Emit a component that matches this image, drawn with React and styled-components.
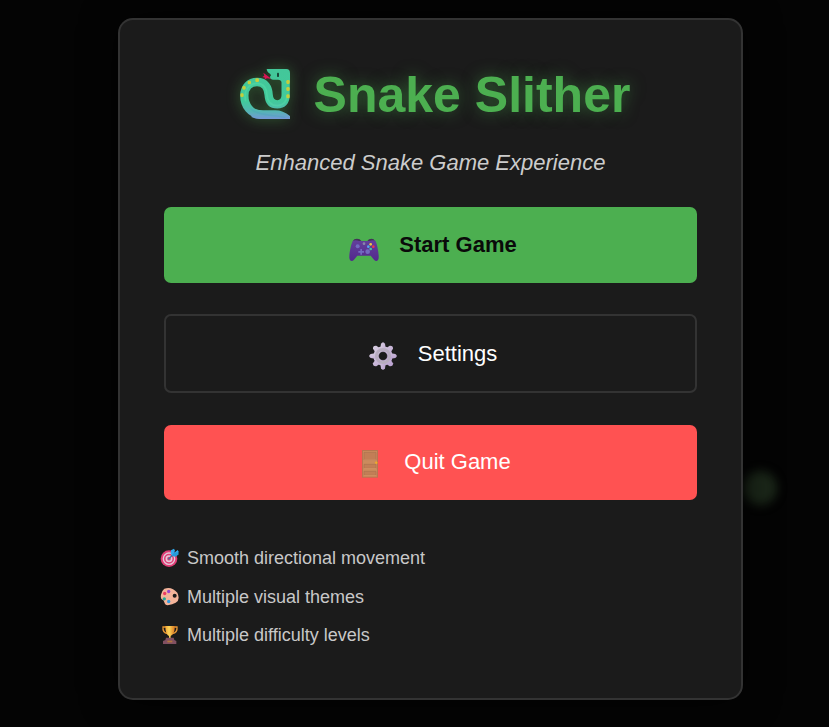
import React from 'react';
import styled, { createGlobalStyle } from 'styled-components';

const GlobalStyle = createGlobalStyle`
  *, *::before, *::after { box-sizing: border-box; }
  body {
    margin: 0;
    background: #040404;
    overflow: hidden;
    font-family: "Liberation Sans", Arial, sans-serif;
  }
`;

const Screen = styled.main`
  position: relative;
  height: 727px;
  padding: 18px 86px 0 118px;
  overflow: hidden;
`;

const Glow = styled.div`
  position: absolute;
  left: 743px;
  top: 471px;
  width: 34px;
  height: 34px;
  border-radius: 50%;
  background: #1b2719;
  filter: blur(5px);
`;

const Card = styled.section`
  position: relative;
  display: flex;
  flex-direction: column;
  height: 682px;
  padding: 44px;
  border: 2px solid #333;
  border-radius: 15px;
  background: #1b1b1b;
  box-shadow: 0 0 36px rgba(0, 0, 0, 0.7);
`;

const Title = styled.h1`
  display: flex;
  align-items: center;
  justify-content: center;
  gap: 23px;
  height: 62px;
  margin: 0;
  padding-left: 8px;
  color: #4caf50;
  font-size: 50px;
  line-height: 62px;
  white-space: nowrap;
  text-shadow: 0 0 16px rgba(76, 175, 80, 0.5);

  svg {
    margin-top: -2px;
    filter: drop-shadow(0 0 7px rgba(76, 175, 80, 0.45));
  }
`;

const Subtitle = styled.p`
  height: 26px;
  margin: 24px 0 31px;
  color: #ccc;
  font-size: 22px;
  font-style: italic;
  line-height: 26px;
  text-align: center;
`;

const Menu = styled.nav`
  display: flex;
  flex-direction: column;
`;

const MenuButton = styled.button`
  display: flex;
  align-items: center;
  justify-content: center;
  gap: ${({ $gap }) => $gap}px;
  width: 100%;
  height: ${({ $height }) => $height}px;
  margin: 0 0 ${({ $after }) => $after}px;
  padding: ${({ $outlined }) => ($outlined ? '1px 0 0' : '0 0 1px')};
  padding-left: ${({ $shift }) => $shift}px;
  border: ${({ $outlined }) => ($outlined ? '2px solid #333' : '0')};
  border-radius: 7px;
  background: ${({ $background }) => $background};
  color: ${({ $color }) => $color};
  font-family: inherit;
  font-size: 22px;
  font-weight: ${({ $bold }) => ($bold ? 700 : 400)};
  line-height: 26px;

  svg { margin-top: ${({ $drop }) => $drop}px; }
`;

const Features = styled.ul`
  display: flex;
  flex-direction: column;
  gap: 16.5px;
  margin: 47px 0 0 -4px;
  padding: 0;
  list-style: none;
`;

const Feature = styled.li`
  display: flex;
  align-items: center;
  gap: 7px;
  height: 22px;
  color: #c8c8c8;
  font-size: 18px;
  line-height: 22px;
`;

const SnakeIcon = () => (
  <svg width="52" height="52" viewBox="42 39 156 156" fill="none">
    <defs>
      <linearGradient id="snake" x1="0" y1="42" x2="0" y2="192" gradientUnits="userSpaceOnUse">
        <stop stopColor="#43c79a" /><stop offset=".65" stopColor="#42c99b" />
        <stop offset=".85" stopColor="#55b5b4" /><stop offset="1" stopColor="#7597d7" />
      </linearGradient>
    </defs>
    <path d="M136 69 115 53l3 9-6 4 8 2-2 6 8-4 14 2" fill="#db1455" />
    <path d="M108 179C77 177 58 151 58 122c0-25 16-41 38-41 25 0 34 18 35 39 1 18 9 28 26 28 16 0 25-10 25-28V60" stroke="url(#snake)" strokeWidth="25" />
    <path d="M125 42h59q11 0 11 12v26h-25q-4-6-10-6h-15q-10-1-10-9 5-3 1-8-10-5-11-15Z" fill="url(#snake)" />
    <path d="M92 163q10 3 23 3h36q23 0 44 17v9h-90q-14 0-26-6Z" fill="url(#snake)" />
    <path d="M62 139c-7-30 7-54 34-54 22 0 29 15 30 36 2 20 12 31 31 31 19 0 29-14 29-32" stroke="#57e0a8" strokeWidth="5" opacity=".45" />
    <path d="M77 161c19 18 51 18 104 26" stroke="#48a5bd" strokeWidth="4" opacity=".4" />
    <g fill="#c6ce3b">
      <rect x="46" y="115" width="10" height="11" rx="4" /><rect x="52" y="93" width="10" height="11" rx="4" />
      <rect x="68" y="77" width="10" height="11" rx="4" /><rect x="91" y="70" width="11" height="11" rx="4" />
      <rect x="184" y="75" width="10" height="12" rx="4" /><rect x="184" y="96" width="10" height="12" rx="4" />
      <rect x="184" y="118" width="10" height="12" rx="4" />
    </g>
    <rect x="156" y="53" width="6" height="13" rx="2" fill="#174839" />
  </svg>
);

const GamepadIcon = () => (
  <svg width="30" height="24" viewBox="28 40 90 70">
    <defs><linearGradient id="pad" x2="0" y2="1"><stop stopColor="#62409b" /><stop offset="1" stopColor="#53288d" /></linearGradient></defs>
    <path d="m39 49 5-6q8-3 16 0l5 5m18 0 5-5q8-3 14 0l5 7" fill="#443258" />
    <path d="M40 47q8-3 18 1h31q10-4 18-1c5 7 11 37 10 52-1 10-9 11-14 5L93 92H53l-10 12c-5 6-13 5-14-5-1-15 6-45 11-52Z" fill="url(#pad)" />
    <g fill="#736ac0"><circle cx="54" cy="64" r="6" /><circle cx="84" cy="80" r="7" /><path d="M62 72h5v6h6v5h-6v6h-5v-6h-6v-5h6Z" /></g>
    <circle cx="73" cy="56" r="4" fill="#8787aa" />
    <circle cx="93" cy="58" r="4" fill="#efca43" /><circle cx="101" cy="65" r="4" fill="#ea3651" />
    <circle cx="86" cy="65" r="4" fill="#55a6ee" /><circle cx="93" cy="72" r="4" fill="#47c39c" />
  </svg>
);

const GearIcon = () => (
  <svg width="30" height="30" viewBox="39 33 90 90">
    <defs><linearGradient id="gear" x2="1" y2="1"><stop stopColor="#d7cde0" /><stop offset="1" stopColor="#b9a0d0" /></linearGradient></defs>
    <g fill="url(#gear)">
      <circle cx="84" cy="78" r="29" />
      <path d="M76 54 78 41q6-9 12 0l2 13v48l-2 13q-6 9-12 0l-2-13Z" />
      <path d="m108 70 13 2q9 6 0 12l-13 2H60l-13-2q-9-6 0-12l13-2Z" />
      <path d="m61 67-7-11q-1-10 10-9l11 8 32 34 7 11q1 10-10 9l-11-8Z" />
      <path d="m61 89-7 11q-1 10 10 9l11-8 32-34 7-11q1-10-10-9l-11 8Z" />
    </g>
    <circle cx="84" cy="78" r="20" fill="none" stroke="#b7acbf" strokeWidth="8" />
    <circle cx="84" cy="78" r="13" fill="#1b1b1b" stroke="#91869b" />
  </svg>
);

const DoorIcon = () => (
  <svg width="18" height="30" viewBox="48 27 54 90">
    <path d="M51 30h48v83H51Z" fill="#b77650" />
    <path d="M54 33h42v77H54Z" fill="#cb8b5d" />
    <g fill="#c27e56" stroke="#aa734f" strokeWidth="2"><path d="M57 37h36v23H57ZM57 73h36v12H57ZM57 94h36v12H57Z" /></g>
    <path d="M57 60h36M57 86h36M57 107h36" stroke="#dc9d6c" strokeWidth="2" />
    <circle cx="94" cy="68" r="3.5" fill="#f3ae25" />
  </svg>
);

const TargetIcon = () => (
  <svg width="20" height="20" viewBox="30 25 60 60">
    <circle cx="57" cy="57" r="25" fill="#df3d75" />
    <circle cx="57" cy="57" r="17" fill="none" stroke="#e4c8d9" strokeWidth="4" />
    <circle cx="57" cy="57" r="8" fill="none" stroke="#e4c8d9" strokeWidth="5" />
    <path d="m55 59 18-18" stroke="#47739d" strokeWidth="4" />
    <path d="m62 42 1-10 9-5 3 6-4 8 12-10 4 7-10 5-7 7Z" fill="#32aaf0" />
    <path d="m65 48 7-9 10-1 5 5-10 8-7-1Z" fill="#259bdb" />
  </svg>
);

const PaletteIcon = () => (
  <svg width="20" height="19" viewBox="30 144 60 56">
    <path d="M43 149q22-8 39 12 10 21-5 30-9 6-24 7-8 0-10-9-2-7-7-8-5-3-3-14 2-12 10-18Z" fill="#f4b49a" />
    <circle cx="74" cy="170" r="6" fill="#1b1b1b" />
    <circle cx="56" cy="157" r="5" fill="#9a43cc" /><circle cx="44" cy="163" r="5" fill="#eb3b61" />
    <circle cx="43" cy="179" r="5" fill="#23a996" /><circle cx="56" cy="187" r="5" fill="#319ae0" />
  </svg>
);

const TrophyIcon = () => (
  <svg width="20" height="20" viewBox="29 255 60 60">
    <defs><linearGradient id="cup"><stop stopColor="#f5a533" /><stop offset=".4" stopColor="#fcd65a" /><stop offset="1" stopColor="#dd7820" /></linearGradient></defs>
    <path d="M48 261H38q-2 17 14 20m17-20h11q2 17-14 20" fill="none" stroke="#e79634" strokeWidth="4" />
    <path d="M45 258h28q1 20-7 26l-5 4v10h-5V288q-11-5-11-30Z" fill="url(#cup)" />
    <path d="M47 293h23l2 7 6 3v9H38v-9l7-3Z" fill="#815061" />
    <path d="M51 302h15v5H51Z" fill="#b1763c" />
  </svg>
);

export default function App() {
  return (
    <>
      <GlobalStyle />
      <Screen>
        <Glow />
        <Card>
          <Title><SnakeIcon /><span>Snake Slither</span></Title>
          <Subtitle>Enhanced Snake Game Experience</Subtitle>
          <Menu>
            <MenuButton $height={76} $after={31} $gap={20} $shift={5} $drop={10} $background="#4caf50" $color="#0a0a0a" $bold>
              <GamepadIcon />Start Game
            </MenuButton>
            <MenuButton $height={79} $after={32} $gap={20} $shift={4} $drop={4} $background="transparent" $color="#fff" $outlined>
              <GearIcon />Settings
            </MenuButton>
            <MenuButton $height={75} $after={0} $gap={25} $shift={11} $drop={4} $background="#ff5252" $color="#fff">
              <DoorIcon />Quit Game
            </MenuButton>
          </Menu>
          <Features>
            <Feature><TargetIcon />Smooth directional movement</Feature>
            <Feature><PaletteIcon />Multiple visual themes</Feature>
            <Feature><TrophyIcon />Multiple difficulty levels</Feature>
          </Features>
        </Card>
      </Screen>
    </>
  );
}
